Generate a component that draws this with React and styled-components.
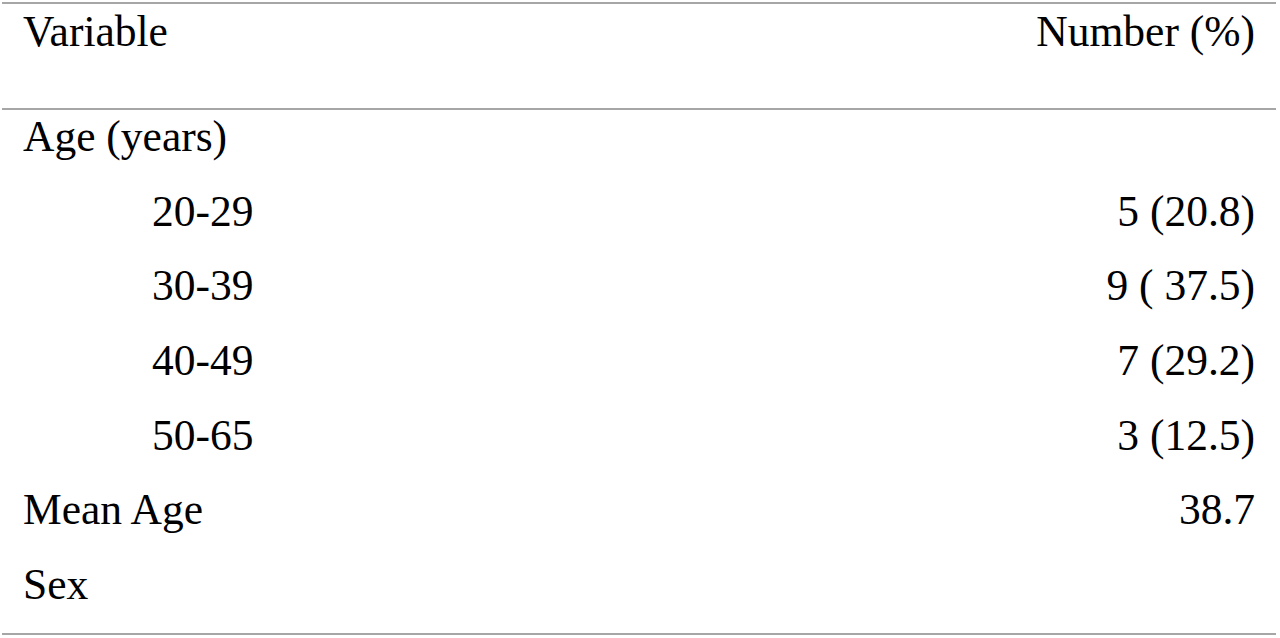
import React from 'react';
import styled, { createGlobalStyle } from 'styled-components';

const GlobalStyle = createGlobalStyle`
  html, body {
    margin: 0;
    padding: 0;
    background: #fff;
  }
`;

// Table frame
const Table = styled.div`
  margin: 2px 0 0 2px;
  width: 1274px;
  border-top: 2px solid #a6a6a6;
  border-bottom: 2px solid #a6a6a6;
  font-family: 'Liberation Serif', 'Times New Roman', serif;
  font-size: 43.5px;
  color: #000;
`;

const HeadRow = styled.div`
  display: flex;
  justify-content: space-between;
  height: 106px;
  box-sizing: border-box;
  padding: 3px 21px 0 21px;
  line-height: 48px;
  border-bottom: 2px solid #a6a6a6;
`;

const Row = styled.div`
  display: flex;
  justify-content: space-between;
  height: 74.7px;
  box-sizing: border-box;
  padding: 2px 21px 0 ${(p) => (p.$sub ? '150px' : '21px')};
  line-height: 48px;
`;

const Cell = styled.span`
  white-space: pre;
`;

const rows = [
  { label: 'Age (years)', value: '' },
  { label: '20-29', value: '5 (20.8)', sub: true },
  { label: '30-39', value: '9 ( 37.5)', sub: true },
  { label: '40-49', value: '7 (29.2)', sub: true },
  { label: '50-65', value: '3 (12.5)', sub: true },
  { label: 'Mean Age', value: '38.7' },
  { label: 'Sex', value: '' },
];

export default function App() {
  return (
    <>
      <GlobalStyle />
      <Table>
        <HeadRow>
          <Cell>Variable</Cell>
          <Cell>Number (%)</Cell>
        </HeadRow>
        {rows.map((r) => (
          <Row key={r.label} $sub={r.sub}>
            <Cell>{r.label}</Cell>
            <Cell>{r.value}</Cell>
          </Row>
        ))}
      </Table>
    </>
  );
}
